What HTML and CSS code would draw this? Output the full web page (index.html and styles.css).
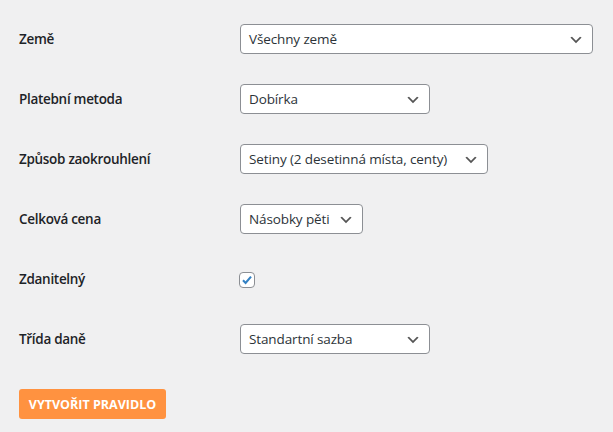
FILE: index.html
```html
<!DOCTYPE html>
<html lang="cs">
<head>
<meta charset="utf-8">
<link rel="stylesheet" href="styles.css">
</head>
<body>
<div class="form">
  <div class="row">
    <div class="label">Země</div>
    <div class="field"><div class="select w-full"><span>Všechny země</span><svg class="chev" viewBox="0 0 20 20"><path d="M5 6l5 5 5-5 2 1-7 7-7-7 2-1z"/></svg></div></div>
  </div>
  <div class="row">
    <div class="label">Platební metoda</div>
    <div class="field"><div class="select w-190"><span>Dobírka</span><svg class="chev" viewBox="0 0 20 20"><path d="M5 6l5 5 5-5 2 1-7 7-7-7 2-1z"/></svg></div></div>
  </div>
  <div class="row">
    <div class="label">Způsob zaokrouhlení</div>
    <div class="field"><div class="select w-248"><span>Setiny (2 desetinná místa, centy)</span><svg class="chev" viewBox="0 0 20 20"><path d="M5 6l5 5 5-5 2 1-7 7-7-7 2-1z"/></svg></div></div>
  </div>
  <div class="row">
    <div class="label">Celková cena</div>
    <div class="field"><div class="select w-123"><span>Násobky pěti</span><svg class="chev" viewBox="0 0 20 20"><path d="M5 6l5 5 5-5 2 1-7 7-7-7 2-1z"/></svg></div></div>
  </div>
  <div class="row">
    <div class="label">Zdanitelný</div>
    <div class="field"><div class="checkbox"><svg viewBox="0 0 16 16"><path d="M3.4 8.3l3 3 6.2-7.2"/></svg></div></div>
  </div>
  <div class="row">
    <div class="label">Třída daně</div>
    <div class="field"><div class="select w-190"><span>Standartní sazba</span><svg class="chev" viewBox="0 0 20 20"><path d="M5 6l5 5 5-5 2 1-7 7-7-7 2-1z"/></svg></div></div>
  </div>
  <div class="submit">
    <button class="btn">Vytvořit pravidlo</button>
  </div>
</div>
</body>
</html>
```

FILE: styles.css
```css
html, body {
  margin: 0;
  padding: 0;
  background: #f0f0f1;
}
body {
  font-family: "Open Sans", "Noto Sans", sans-serif;
  font-size: 13.5px;
  color: #1d2327;
}
.form {
  padding: 9px 20px 0 19px;
}
.row {
  display: grid;
  grid-template-columns: 221px 1fr;
  height: 60px;
  align-items: center;
}
.label {
  font-weight: 600;
  color: #1d2327;
  letter-spacing: -0.3px;
}
.field {
  display: flex;
  align-items: center;
}
.select {
  box-sizing: border-box;
  height: 30px;
  background: #fff;
  border: 1px solid #8c8f94;
  border-radius: 4px;
  display: flex;
  align-items: center;
  justify-content: space-between;
  padding: 0 8px 0 8px;
  color: #2c3338;
  font-size: 13.5px;
  letter-spacing: -0.12px;
}
.w-full { width: 353px; }
.w-190 { width: 190px; }
.w-248 { width: 248px; }
.w-123 { width: 123px; }
.chev {
  width: 16px;
  height: 16px;
  fill: #555;
  flex: none;
  margin-top: 2px;
}
.checkbox {
  box-sizing: border-box;
  width: 16px;
  height: 16px;
  border: 1px solid #8c8f94;
  border-radius: 4px;
  background: #fff;
  display: flex;
  align-items: center;
  justify-content: center;
  margin-left: -1px;
  margin-top: 1px;
}
.checkbox svg {
  width: 14px;
  height: 14px;
  fill: none;
  stroke: #3582c4;
  stroke-width: 2.4;
}
.submit {
  padding-top: 20px;
}
.btn {
  font-family: inherit;
  height: 30px;
  width: 147px;
  border: 0;
  border-radius: 3px;
  background: #ff9240;
  color: #fff;
  font-weight: 700;
  font-size: 12.5px;
  text-transform: uppercase;
  padding: 0;
  cursor: pointer;
}
```
